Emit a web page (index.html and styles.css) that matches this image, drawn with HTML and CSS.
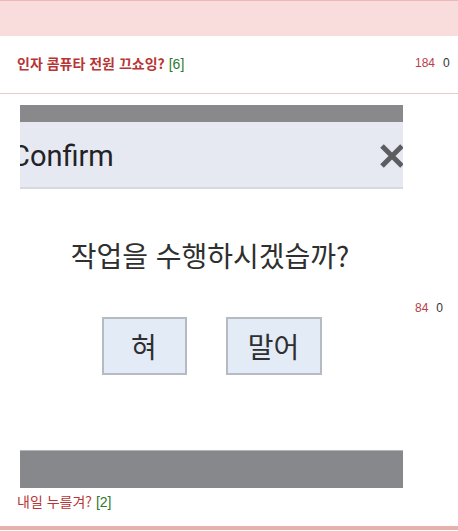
FILE: index.html
```html
<!DOCTYPE html>
<html lang="ko">
<head>
<meta charset="utf-8">
<link rel="stylesheet" href="styles.css">
</head>
<body>
<div class="list">
  <div class="band"></div>
  <div class="row row-first">
    <div class="main">
      <a class="title bold">인자 콤퓨타 전원 끄쇼잉? <span class="cnt">[6]</span></a>
    </div>
    <div class="stats"><span class="views">184</span><span class="votes">0</span></div>
  </div>
  <div class="row row-second">
    <div class="main">
      <div class="shot">
        <div class="shot-top"></div>
        <div class="shot-head">
          <span class="shot-title">Confirm</span>
          <svg class="shot-x" width="26" height="24" viewBox="0 0 26 24"><path d="M3 2 L23 22 M23 2 L3 22" stroke="#5b5d60" stroke-width="5" stroke-linecap="butt"/></svg>
        </div>
        <div class="shot-body">
          <div class="shot-q">작업을 수행하시겠습까?</div>
          <div class="shot-btns">
            <div class="shot-btn b1">혀</div>
            <div class="shot-btn b2">말어</div>
          </div>
        </div>
        <div class="shot-bottom"></div>
      </div>
      <a class="title">내일 누를겨? <span class="cnt">[2]</span></a>
    </div>
    <div class="stats stats-low"><span class="views">84</span><span class="votes">0</span></div>
  </div>
</div>
</body>
</html>
```

FILE: styles.css
```css
html, body {
  margin: 0;
  padding: 0;
  background: #fff;
}
body {
  font-family: "Noto Sans CJK KR", "Liberation Sans", sans-serif;
}
.list {
  width: 458px;
}
.band {
  height: 35px;
  background: #f9dcdc;
  border-top: 1px solid #eeb6b6;
}
.row {
  display: flex;
  align-items: center;
}
.row-first {
  height: 57px;
  border-bottom: 1px solid #f2c9c9;
}
.row-first .main {
  margin-top: -6px;
}
.row-first .stats {
  margin-top: -3px;
}
.row-second {
  border-bottom: 4px solid #e9b1ab;
  padding-bottom: 14px;
  margin-bottom: 3px;
}
.main {
  flex: 1;
  padding-left: 17px;
}
.row-second .main {
  padding-left: 0;
  padding-top: 11px;
  display: flex;
  flex-direction: column;
}
.row-second .title {
  padding-left: 17px;
  margin-top: 3px;
  line-height: 20px;
}
.title {
  color: #b83535;
  font-size: 14px;
  text-decoration: none;
}
.bold {
  font-weight: bold;
}
.cnt {
  color: #2e7a2e;
  font-weight: normal;
  font-family: "Liberation Sans", sans-serif;
}
.stats {
  width: 43px;
  font-family: "Liberation Sans", sans-serif;
  font-size: 12px;
  display: flex;
}
.stats-low {
  margin-top: 10px;
}
.views {
  color: #b84049;
  margin-right: 8px;
}
.votes {
  color: #333;
}
.shot {
  margin-left: 20px;
  width: 383px;
  height: 383px;
  overflow: hidden;
  display: flex;
  flex-direction: column;
}
.shot-top {
  height: 17px;
  background: #89898c;
}
.shot-head {
  height: 65px;
  background: #e6e9f1;
  border-bottom: 2px solid #d6d9df;
  display: flex;
  align-items: center;
  justify-content: space-between;
  overflow: hidden;
}
.shot-title {
  font-family: "Roboto", "Noto Sans", sans-serif;
  font-size: 29px;
  color: #222326;
  margin-left: -9px;
  margin-top: 2px;
}
.shot-x {
  margin-right: -2px;
  margin-top: 2px;
}
.shot-body {
  flex: 1;
  background: #fff;
  display: flex;
  flex-direction: column;
  align-items: center;
}
.shot-q {
  margin-top: 46px;
  font-size: 28px;
  line-height: 40px;
  color: #2f2f2f;
  margin-left: -3px;
}
.shot-btns {
  margin-top: 42px;
  display: flex;
  gap: 39px;
}
.shot-btn {
  height: 54px;
  border: 2px solid #b6bac2;
  background: #e3ebf7;
  color: #2f2f2f;
  font-size: 28px;
  display: flex;
  align-items: center;
  justify-content: center;
}
.b1 { width: 81px; }
.b2 { width: 92px; }
.shot-bottom {
  height: 37px;
  background: #87888b;
  border-top: 1px solid #b4b5b8;
}
```
